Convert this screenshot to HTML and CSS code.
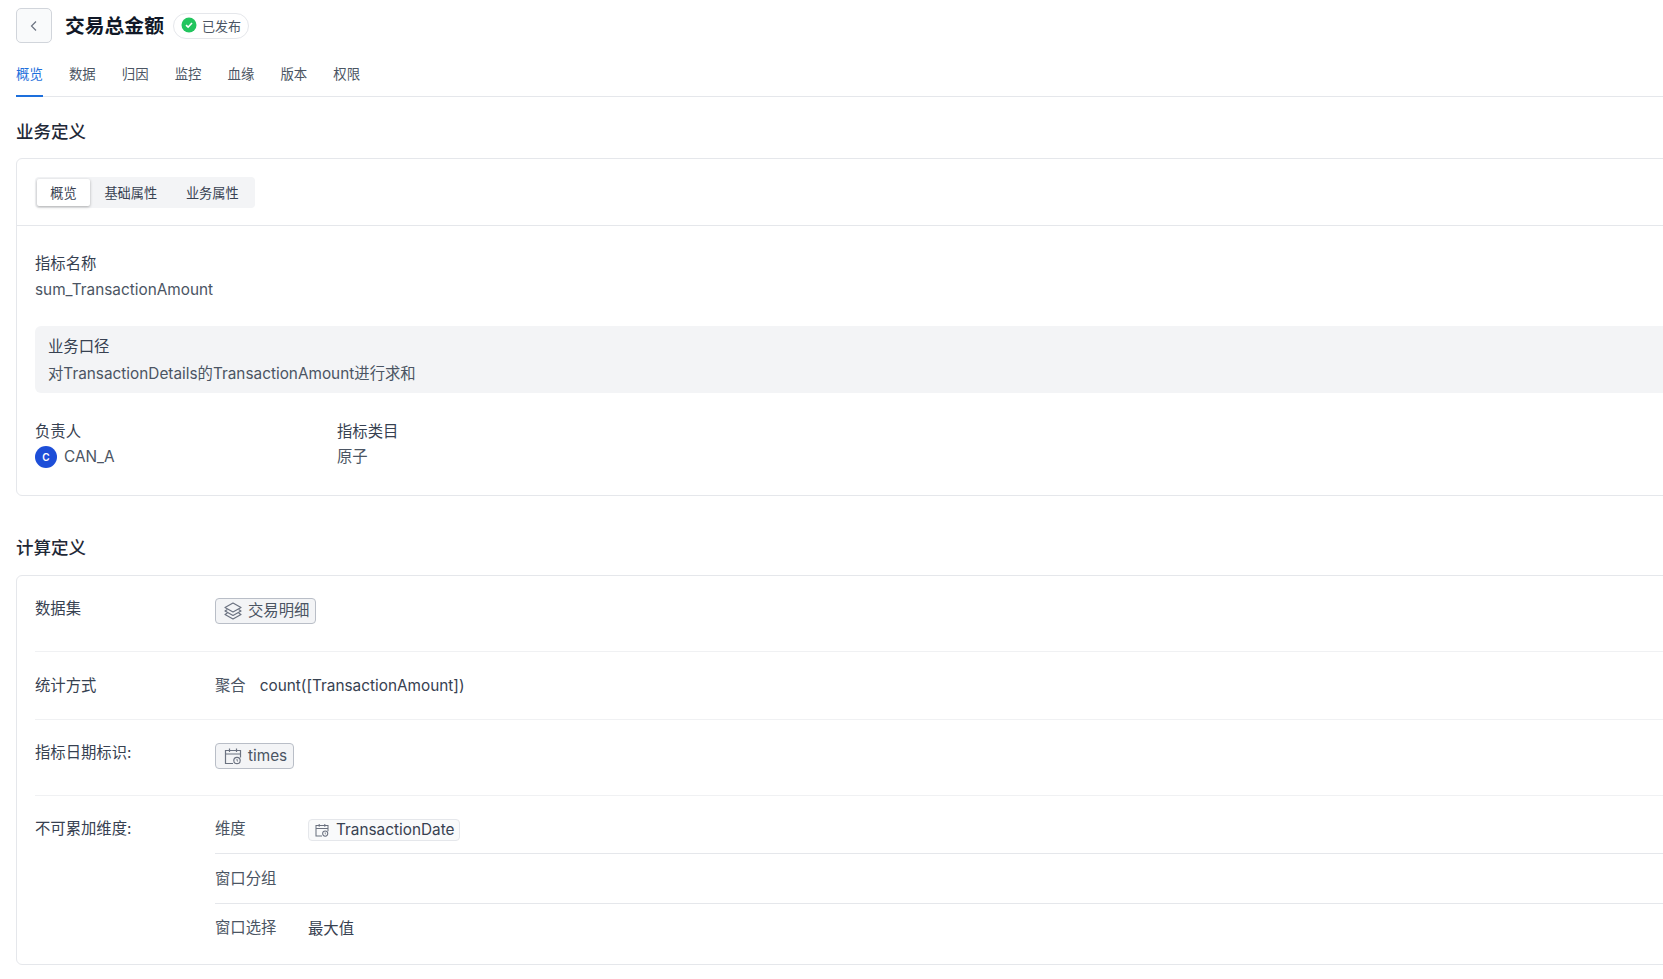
FILE: index.html
```html
<!DOCTYPE html>
<html lang="zh-CN">
<head>
    <meta charset="UTF-8">
    <title>交易总金额</title>
    <link rel="stylesheet" href="styles.css">
</head>
<body>
<div class="page">
    <header class="header">
        <button class="back-btn" type="button">
            <svg width="14" height="14" viewBox="0 0 14 14" fill="none" stroke="#6b7280" stroke-width="1.2"><path d="M9 2.5 4.5 7 9 11.5"/></svg>
        </button>
        <h1 class="title">交易总金额</h1>
        <span class="status">
            <svg width="16" height="16" viewBox="0 0 16 16"><circle cx="8" cy="8" r="7.5" fill="#22c55e"/><path d="M5 8.2 7.1 10.2 11 6" fill="none" stroke="#fff" stroke-width="1.6"/></svg>
            已发布
        </span>
    </header>

    <nav class="tabs">
        <a class="tab active">概览</a>
        <a class="tab">数据</a>
        <a class="tab">归因</a>
        <a class="tab">监控</a>
        <a class="tab">血缘</a>
        <a class="tab">版本</a>
        <a class="tab">权限</a>
    </nav>

    <h2 class="section-title first">业务定义</h2>
    <section class="card">
        <div class="card-head">
            <div class="segmented">
                <span class="seg active">概览</span>
                <span class="seg">基础属性</span>
                <span class="seg">业务属性</span>
            </div>
        </div>
        <div class="card-body">
            <div class="field">
                <div class="field-label">指标名称</div>
                <div class="field-value">sum_TransactionAmount</div>
            </div>
            <div class="callout">
                <div class="field-label">业务口径</div>
                <div class="field-value">对TransactionDetails的TransactionAmount进行求和</div>
            </div>
            <div class="field-row">
                <div class="field owner">
                    <div class="field-label">负责人</div>
                    <div class="field-value user"><span class="avatar">C</span>CAN_A</div>
                </div>
                <div class="field">
                    <div class="field-label">指标类目</div>
                    <div class="field-value">原子</div>
                </div>
            </div>
        </div>
    </section>

    <h2 class="section-title">计算定义</h2>
    <section class="card calc">
        <div class="calc-row row-dataset">
            <div class="calc-label">数据集</div>
            <div class="calc-value">
                <span class="tag">
                    <svg width="20" height="20" viewBox="0 0 20 20" fill="none" stroke="#6b7280" stroke-width="1.2" stroke-linejoin="round"><path d="M10 2 18 6.5 10 11 2 6.5Z"/><path d="M4.4 8.6 2 10 10 14.5 18 10 15.6 8.6"/><path d="M4.4 12.1 2 13.5 10 18 18 13.5 15.6 12.1"/></svg>
                    交易明细
                </span>
            </div>
        </div>
        <div class="calc-row row-method">
            <div class="calc-label">统计方式</div>
            <div class="calc-value method"><span class="muted">聚合</span><span class="dark">count([TransactionAmount])</span></div>
        </div>
        <div class="calc-row row-date">
            <div class="calc-label">指标日期标识:</div>
            <div class="calc-value">
                <span class="tag">
                    <svg width="20" height="20" viewBox="0 0 20 20" fill="none" stroke="#6b7280" stroke-width="1.2"><path d="M10 17.5H2.5V4.5h15v7"/><path d="M2.5 8h15M6.5 2.5v3.5M13.5 2.5v3.5"/><circle cx="14" cy="14.5" r="3.2"/><path d="M14 13v1.6l1 .7" stroke-width="1"/></svg>
                    times
                </span>
            </div>
        </div>
        <div class="calc-row row-additive">
            <div class="calc-label">不可累加维度:</div>
            <div class="sub-rows">
                <div class="sub-row">
                    <div class="sub-label">维度</div>
                    <span class="tag small">
                        <svg width="16" height="16" viewBox="0 0 20 20" fill="none" stroke="#6b7280" stroke-width="1.3"><path d="M10 17.5H2.5V4.5h15v7"/><path d="M2.5 8h15M6.5 2.5v3.5M13.5 2.5v3.5"/><circle cx="14" cy="14.5" r="3.2"/><path d="M14 13v1.6l1 .7" stroke-width="1"/></svg>
                        TransactionDate
                    </span>
                </div>
                <div class="sub-row">
                    <div class="sub-label">窗口分组</div>
                </div>
                <div class="sub-row">
                    <div class="sub-label">窗口选择</div>
                    <div class="sub-value">最大值</div>
                </div>
            </div>
        </div>
    </section>
</div>
</body>
</html>
```
FILE: styles.css
```css
* {
    box-sizing: border-box;
}

html, body {
    margin: 0;
    padding: 0;
    height: 100%;
    overflow: hidden;
    background: #fff;
}

body {
    font-family: Inter, "Noto Sans CJK SC", sans-serif;
    color: #374151;
    font-size: 15.35px;
}

.page {
    width: 1760px;
    padding: 8px 0 0 16px;
}

.header {
    display: flex;
    align-items: center;
    height: 35px;
}

.back-btn {
    width: 36px;
    height: 35px;
    padding: 0;
    display: flex;
    align-items: center;
    justify-content: center;
    background: #f9fafb;
    border: 1px solid #d1d5db;
    border-radius: 5px;
}

.title {
    margin: 0 0 0 13px;
    font-size: 19.8px;
    line-height: 28px;
    font-weight: 600;
    color: #111827;
}

.status {
    display: flex;
    align-items: center;
    gap: 5px;
    height: 26px;
    margin-left: 9px;
    padding: 0 7px 1px;
    border: 1px solid #e5e7eb;
    border-radius: 13px;
    font-size: 13px;
    color: #4b5563;
}

.tabs {
    display: flex;
    gap: 26.1px;
    height: 45px;
    margin-top: 9px;
    border-bottom: 1px solid #e5e7eb;
}

.tab {
    height: 45px;
    padding-top: 12px;
    font-size: 13.4px;
    line-height: 20px;
    color: #4b5563;
}

.tab.active {
    color: #1d6fdc;
    border-bottom: 2px solid #1d6fdc;
}

.section-title {
    margin: 40px 0 15px;
    font-size: 17.5px;
    line-height: 24px;
    font-weight: 500;
    color: #1f2937;
}

.section-title.first {
    margin-top: 23px;
    margin-bottom: 14px;
}

.card {
    border: 1px solid #e5e7eb;
    border-radius: 6px;
    background: #fff;
}

.card-head {
    height: 67px;
    padding: 18px 18px 0;
    border-bottom: 1px solid #e5e7eb;
}

.segmented {
    display: inline-flex;
    height: 31px;
    padding: 2px;
    background: #f3f4f6;
    border-radius: 4px;
}

.seg {
    display: flex;
    align-items: center;
    justify-content: center;
    width: 81.5px;
    padding-bottom: 1px;
    font-size: 13.2px;
    color: #374151;
}

.seg.active {
    width: 53px;
    background: #fff;
    border-radius: 2px;
    box-shadow: 0 1px 3px rgba(0, 0, 0, .3);
}

.card-body {
    padding: 25px 18px 0;
    height: 269px;
}

.field-label {
    line-height: 26px;
    color: #374151;
}

.field-value {
    line-height: 26px;
    color: #4b5563;
}

.callout {
    height: 67px;
    margin-top: 23px;
    padding: 8px 13px 0;
    background: #f3f4f6;
    border-radius: 6px;
}

.callout .field-value {
    margin-top: 1px;
}

.field-row {
    display: flex;
    margin-top: 26px;
}

.field-row .field-value {
    margin-top: -1px;
}

.owner {
    width: 302px;
}

.user {
    display: flex;
    align-items: center;
    gap: 7px;
}

.avatar {
    display: flex;
    align-items: center;
    justify-content: center;
    width: 22px;
    height: 22px;
    border-radius: 50%;
    background: #1d4ed8;
    color: #fff;
    font-size: 10px;
    font-weight: 600;
}

.calc {
    padding: 0 18px;
}

.calc-row {
    display: flex;
    border-bottom: 1px solid #f0f1f3;
}

.calc-row:last-child {
    border-bottom: none;
}

.row-dataset {
    height: 76px;
    padding-top: 20px;
}

.row-dataset .calc-value {
    margin-top: 2px;
}

.row-method {
    height: 68px;
    padding-top: 21px;
}

.row-date {
    height: 76px;
    padding-top: 20px;
}

.row-additive {
    height: 168px;
}

.row-additive .calc-label {
    margin-top: 20px;
}

.calc-label {
    width: 180px;
    flex: none;
    line-height: 26px;
    color: #374151;
}

.calc-value {
    line-height: 26px;
}

.row-date .calc-value {
    margin-top: 3px;
}

.method {
    display: flex;
    gap: 14px;
}

.muted {
    color: #4b5563;
}

.dark {
    color: #374151;
}

.tag {
    display: inline-flex;
    align-items: center;
    gap: 5px;
    height: 26px;
    padding: 0 6px 0 7px;
    background: #f3f4f6;
    border: 1px solid #b9bec7;
    border-radius: 4px;
    line-height: 24px;
    color: #4b5563;
}

.tag.small {
    height: 22px;
    padding: 0 5px;
    gap: 6px;
    background: #f9fafb;
    border-color: #e5e7eb;
    color: #374151;
}

.sub-rows {
    flex: 1;
}

.sub-row {
    display: flex;
    align-items: center;
    height: 50px;
    border-bottom: 1px solid #e5e7eb;
}

.sub-row:first-child {
    height: 58px;
    padding-top: 11px;
}

.sub-row:first-child .sub-label {
    margin-top: -6px;
}

.sub-row:last-child {
    border-bottom: none;
    height: 47px;
}

.sub-label {
    width: 93px;
    margin-top: -4px;
    color: #4b5563;
}

.sub-value {
    margin-top: -2px;
    color: #374151;
}
```
